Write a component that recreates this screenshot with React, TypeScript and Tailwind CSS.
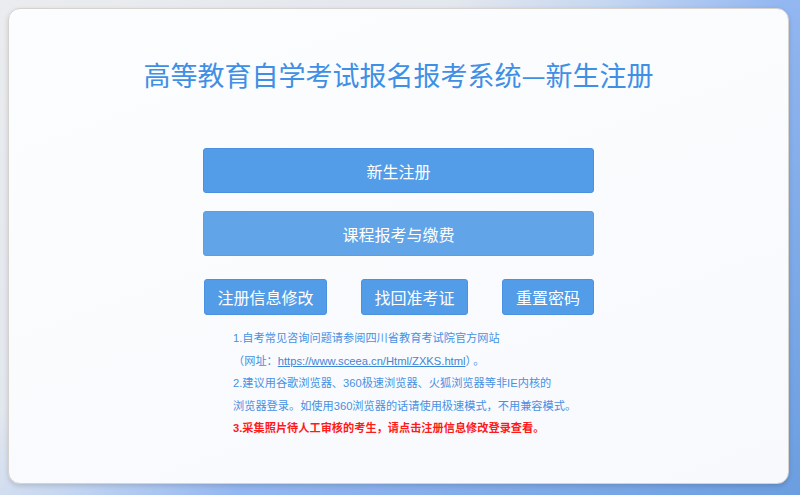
import React from "react";

const cjk = { fontFamily: '"Noto Sans CJK SC", "Noto Sans", sans-serif' };
const mixed = { fontFamily: '"Liberation Sans", "Noto Sans CJK SC", sans-serif' };

export default function App() {
  return (
    <div className="w-[800px] h-[495px] overflow-hidden bg-[linear-gradient(138deg,#eaecef_0%,#e3e7ee_34%,#c6d7f1_45%,#93b7f1_58%,#6b9ee0_100%)] pt-2 pl-2">
      <div className="w-[781px] h-[476px] rounded-[12px] border border-[#d6d3cf] bg-[linear-gradient(160deg,#fcfdfe_0%,#f8f9fd_100%)] shadow-[0_2px_5px_rgba(0,0,0,0.15)] flex flex-col items-center pt-[50px]">
        <h1 className="text-[27px] leading-[32px] text-[#3f8fe5] font-normal" style={cjk}>
          高等教育自学考试报名报考系统—新生注册
        </h1>
        <div className="w-[391px] mt-[57px] flex flex-col" style={cjk}>
          <button className="h-[45px] w-full rounded-[3px] border border-[#4a91e1] bg-[#539ce7] text-white text-[16px]">
            新生注册
          </button>
          <button className="h-[45px] w-full mt-[18px] rounded-[3px] border border-[#5a9ee4] bg-[#61a4e8] text-white text-[16px]">
            课程报考与缴费
          </button>
          <div className="flex justify-between mt-[23px]">
            <button className="h-[36px] w-[123px] ml-[1px] rounded-[3px] border border-[#4a91e1] bg-[#539ce7] text-white text-[16px]">
              注册信息修改
            </button>
            <button className="h-[36px] w-[107px] rounded-[3px] border border-[#4a91e1] bg-[#539ce7] text-white text-[16px]">
              找回准考证
            </button>
            <button className="h-[36px] w-[92px] rounded-[3px] border border-[#4a91e1] bg-[#539ce7] text-white text-[16px]">
              重置密码
            </button>
          </div>
          <div className="mt-[12px] pl-[30px] text-[11.2px] leading-[22.5px] text-[#4791e2] whitespace-nowrap" style={mixed}>
            <p>1.自考常见咨询问题请参阅四川省教育考试院官方网站</p>
            <p>
              （网址：<a className="underline text-[#3f86d6]">https://www.sceea.cn/Html/ZXKS.html</a>）<span className="ml-[2px]">。</span>
            </p>
            <p>2.建议用谷歌浏览器、360极速浏览器、火狐浏览器等非IE内核的</p>
            <p>浏览器登录。如使用360浏览器的话请使用极速模式，不用兼容模式。</p>
            <p className="text-[#ff1a1a] font-bold">3.采集照片待人工审核的考生，请点击注册信息修改登录查看。</p>
          </div>
        </div>
      </div>
    </div>
  );
}
